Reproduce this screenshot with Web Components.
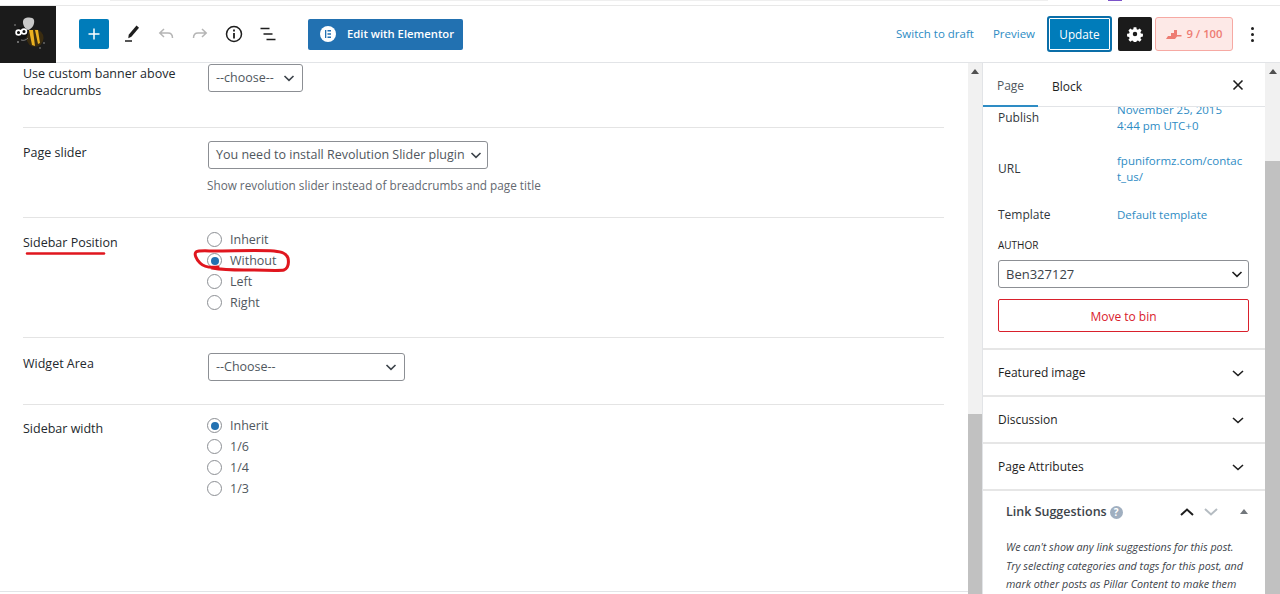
<!DOCTYPE html>
<html>
<head>
<meta charset="utf-8">
<style>
  html, body { margin: 0; height: 100%; overflow: hidden; background: #fff; }
  body { font: 12.5px/20px "Open Sans", "Noto Sans", sans-serif; color: #32373c; }
</style>
</head>
<body>
<wp-editor></wp-editor>
<script>
const css = `* { box-sizing: border-box; }`;

class WpSelect extends HTMLElement {
  constructor() {
    super();
    this.attachShadow({ mode: "open" });
    const strong = this.hasAttribute("dark");
    this.shadowRoot.innerHTML = `<style>${css}
      :host { display: inline-flex; align-items: center; justify-content: space-between; white-space: nowrap;
        width: var(--w, 95px); height: var(--h, 28px); padding: 0 var(--pr, 6px) 0 7px; margin-left: var(--ml, 1px);
        border: 1px solid #8c8f94; border-radius: 3px; background: #fff; color: #50575e; }
      svg { flex: none; }
    </style><slot></slot>
    <svg width="14" height="14" viewBox="0 0 14 14" fill="none" stroke="${strong ? "#1e1e1e" : "#3c434a"}" stroke-width="1.6"><path d="M2.5 5 7 9.3 11.5 5"/></svg>`;
  }
}
customElements.define("wp-select", WpSelect);

class WpRadio extends HTMLElement {
  constructor() {
    super();
    this.attachShadow({ mode: "open" });
    const on = this.hasAttribute("checked");
    this.shadowRoot.innerHTML = `<style>${css}
      :host { display: flex; align-items: center; gap: 8px; height: 21px; color: #50575e; }
      .dot { width: 15px; height: 15px; border: 1px solid #8c8f94; border-radius: 50%; background: #fff;
        display: grid; place-items: center; }
      .dot i { width: 8px; height: 8px; border-radius: 50%; background: #2271b1; display: ${on ? "block" : "none"}; }
    </style><span class="dot"><i></i></span><slot></slot>`;
  }
}
customElements.define("wp-radio", WpRadio);

class SettingRow extends HTMLElement {
  constructor() {
    super();
    this.attachShadow({ mode: "open" });
    this.shadowRoot.innerHTML = `<style>${css}
      :host { display: grid; grid-template-columns: 184px 1fr; margin: 0 24px 0 23px;
        border-bottom: 1px solid #e4e4e4; height: var(--row, 90px); padding-top: var(--pt, 24px); }
      :host([last]) { border-bottom: 0; }
      .label { color: #23282d; font-weight: 500; line-height: 17px; padding-top: var(--lt, 0); }
      .field { display: flex; flex-direction: column; align-items: flex-start; }
    </style><div class="label"><slot name="label"></slot></div><div class="field"><slot></slot></div>`;
  }
}
customElements.define("setting-row", SettingRow);

class TopBar extends HTMLElement {
  constructor() {
    super();
    this.attachShadow({ mode: "open" });
    this.shadowRoot.innerHTML = `<style>${css}
      :host { display: flex; align-items: center; height: 58px; flex: none; background: #fff;
        border-top: 1px solid #e8e8e8; border-bottom: 1px solid #e2e4e7; padding-right: 25px; }
      .logo { width: 56px; height: 57px; background: #1b1b1b; flex: none; display: grid; place-items: center; }
      .add { width: 30px; height: 30px; margin-left: 23px; background: #007cba; border-radius: 2px; display: grid; place-items: center; flex: none; }
      .tool { flex: none; display: grid; place-items: center; }
      .elementor { display: flex; align-items: center; gap: 11px; margin-left: 30px; height: 31px; width: 155px; padding-left: 12px;
        background: #2271b1; color: #fff; border-radius: 2px; font-weight: 600; font-size: 11.25px; }
      .elementor b { width: 16px; height: 16px; border-radius: 50%; background: #fff; display: grid; place-items: center; }
      .right { margin-left: auto; display: flex; align-items: center; }
      a { color: #2e8cc4; font-size: 11.5px; }
      .update { margin-left: 12px; width: 65px; height: 36px; background: #007cba; color: #fff; font-weight: 500; font-size: 11.75px; border-radius: 3px;
        display: grid; place-items: center; box-shadow: 0 0 0 1px #fff inset; border: 2px solid #0a6ea8; }
      .gear { margin-left: 6px; width: 34px; height: 34px; background: #1b1b1b; border-radius: 2px; display: grid; place-items: center; }
      .score { margin-left: 3px; width: 78px; height: 34px; background: #fde9e7; border: 1px solid #f6a9a3; border-radius: 3px; color: #ee7c73;
        display: flex; align-items: center; justify-content: center; gap: 5px; font-weight: 600; font-size: 11.25px; }
      .more { margin-left: 18px; width: 4px; display: flex; flex-direction: column; gap: 3px; }
      .more i { width: 3px; height: 3px; background: #1e1e1e; border-radius: 50%; }
    </style>
    <div class="logo">
      <svg width="36" height="36" viewBox="0 0 36 36">
        <path d="M16 13c-3-3-4-8-2-10 3-2 9-2 10 1 1 4-2 9-6 10z" fill="#c9c9c9"/>
        <ellipse cx="25" cy="22" rx="8.500" ry="8.800" fill="#3a2c10"/>
        <path d="M19 14l3 15 3 1-2-16zM25 14l3 14 2-1-2-13z" fill="#eab020"/>
        <circle cx="12" cy="17" r="6" fill="#111"/>
        <circle cx="8.500" cy="16.500" r="2.400" fill="none" stroke="#fff" stroke-width="1.700"/>
        <circle cx="14" cy="15.500" r="2.400" fill="none" stroke="#fff" stroke-width="1.700"/>
        <path d="M11 24c3 1 5 0 7-2" stroke="#777" fill="none"/>
        <circle cx="5" cy="9" r=".8" fill="#999"/><circle cx="30" cy="32" r=".8" fill="#999"/><circle cx="8" cy="26" r="1" fill="#888"/><circle cx="34" cy="27" r=".8" fill="#999"/>
      </svg>
    </div>
    <div class="add"><svg width="16" height="16" viewBox="0 0 16 16" stroke="#fff" stroke-width="1.5"><path d="M8 2.500v11M2.500 8h11"/></svg></div>
    <div class="tool" style="margin-left:13px;width:20px"><svg width="20" height="20" viewBox="0 0 20 20"><path d="M14.500 1.500l2.500 2.300-7.600 9-3.100 1.400.4-3.400z" fill="#1e1e1e"/><path d="M3 17h7" stroke="#1e1e1e" stroke-width="1.500"/></svg></div>
    <div class="tool" style="margin-left:14px;width:20px"><svg width="20" height="20" viewBox="0 0 20 20" fill="none" stroke="#b5b5b5" stroke-width="1.500"><path d="M8 5 3.800 9 8 13M4 9h8c3 0 4.500 1.800 4.500 5"/></svg></div>
    <div class="tool" style="margin-left:14px;width:20px"><svg width="20" height="20" viewBox="0 0 20 20" fill="none" stroke="#b5b5b5" stroke-width="1.500"><path d="M12 5l4.200 4L12 13M16 9H8c-3 0-4.500 1.800-4.500 5"/></svg></div>
    <div class="tool" style="margin-left:14px;width:20px"><svg width="20" height="20" viewBox="0 0 20 20" fill="none" stroke="#1e1e1e" stroke-width="1.500"><circle cx="10" cy="10" r="7.500"/><path d="M10 9v5.500M10 5.500v2" stroke-width="1.800"/></svg></div>
    <div class="tool" style="margin-left:14px;width:20px"><svg width="20" height="20" viewBox="0 0 20 20" stroke="#1e1e1e" stroke-width="1.500"><path d="M2.500 4.500h9M5.500 10h9M8.500 15.500h9"/></svg></div>
    <div class="elementor"><b><svg width="10" height="10" viewBox="0 0 10 10" fill="#2271b1"><path d="M2 1h1.300v8H2zM4.500 1H8v1.400H4.500zM4.500 4.300H8v1.400H4.500zM4.500 7.600H8V9H4.500z"/></svg></b><span>Edit with Elementor</span></div>
    <div class="right">
      <a style="margin-right:19px">Switch to draft</a>
      <a>Preview</a>
      <div class="update">Update</div>
      <div class="gear"><svg width="18" height="18" viewBox="0 0 18 18"><path fill="#fff" fill-rule="evenodd" d="M7.500 1.500h3l.4 2.200 1.400.6 1.900-1.300 2.100 2.100-1.300 1.900.6 1.400 2.200.4v3l-2.200.4-.6 1.400 1.300 1.900-2.100 2.100-1.900-1.300-1.400.6-.4 1.100h-3l-.4-1.100-1.400-.6-1.900 1.300-2.100-2.100 1.300-1.900-.6-1.400-2.200-.4v-3l2.200-.4.600-1.400-1.300-1.900 2.100-2.100 1.900 1.300 1.400-.6zM9 6.500a2.500 2.500 0 1 0 0 5 2.500 2.500 0 0 0 0-5z" transform="translate(.9 .9) scale(.9)"/></svg></div>
      <div class="score"><svg width="16" height="12" viewBox="0 0 16 12" fill="#ee7c73"><path d="M0 11l2-3h3V5h3V2h3v5h4.500v1.500H11L9 11z"/></svg><span>9 / 100</span></div>
      <div class="more"><i></i><i></i><i></i></div>
    </div>`;
  }
}
customElements.define("top-bar", TopBar);

class TopStrip extends HTMLElement {
  constructor() {
    super();
    this.attachShadow({ mode: "open" });
    this.shadowRoot.innerHTML = `<style>${css}
      :host { display: flex; height: 5px; flex: none; background: #fff; }
      .grey { margin-left: 110px; width: 938px; height: 1px; background: #efefef; }
      .purple { margin-left: 60px; width: 14px; height: 1px; background: #7b52c9; }
    </style><div class="grey"></div><div class="purple"></div>`;
  }
}
customElements.define("top-strip", TopStrip);

class ScrollTrack extends HTMLElement {
  constructor() {
    super();
    this.attachShadow({ mode: "open" });
    this.shadowRoot.innerHTML = `<style>${css}
      :host { display: flex; flex-direction: column; flex: none; width: var(--sw, 15px); background: #f1f1f1; }
      .arrow { height: 15px; display: grid; place-items: center; margin-top: 1px; }
      .arrow i { width: 0; height: 0; border: 4px solid transparent; border-top: 0; border-bottom: 5px solid #505050; }
      .gap { height: var(--gap, 340px); }
      .thumb { flex: 1; background: #c1c1c1; }
    </style><div class="arrow"><i></i></div><div class="gap"></div><div class="thumb"></div>`;
  }
}
customElements.define("scroll-track", ScrollTrack);

class SidePanel extends HTMLElement {
  constructor() {
    super();
    this.attachShadow({ mode: "open" });
    this.shadowRoot.innerHTML = `<style>${css}
      :host { display: block; border-top: 2px solid #e6e6e6; padding: 0 20px 0 15px; height: 47px; }
      .row { display: flex; align-items: center; justify-content: space-between; height: 45px; font-weight: 500; color: #1e1e1e; font-size: 12px; }
    </style><div class="row"><slot></slot><svg width="14" height="14" viewBox="0 0 14 14" fill="none" stroke="#1e1e1e" stroke-width="1.600"><path d="M2 5l5 4.500L12 5"/></svg></div>`;
  }
}
customElements.define("side-panel", SidePanel);

class EditorSidebar extends HTMLElement {
  constructor() {
    super();
    this.attachShadow({ mode: "open" });
    this.shadowRoot.innerHTML = `<style>${css}
      :host { display: flex; flex-direction: column; width: 283px; flex: none; height: 100%; background: #fff;
        border-left: 1px solid #e2e4e7; overflow: hidden; }
      .tabs { display: flex; align-items: stretch; height: 44px; flex: none; border-bottom: 1px solid #e2e4e7; background: #fff; position: relative; z-index: 1; font-size: 12px; }
      .tab { display: grid; place-items: center; height: 44px; padding-top: 3px; color: #1e1e1e; }
      .tab.on { width: 55px; color: #50575e; border-bottom: 2px solid #2e8cc4; }
      .tab.blk { margin-left: 14px; }
      .close { margin-left: auto; margin-right: 20px; align-self: center; }
      .scroll { flex: 1; overflow: hidden; }
      .summary { padding: 0 16px 0 15px; margin-top: -5px; height: 246px; }
      .kv { display: grid; grid-template-columns: 119px 128px; font-size: 12px; }
      .kv a { color: #2e8cc4; line-height: 16px; font-size: 11.5px; overflow-wrap: anywhere; }
      .kv span { color: #32373c; }
      .author { font-size: 10px; font-weight: 500; color: #1e1e1e; line-height: 14px; margin-top: 15px; }
      .bin { margin-top: 11px; height: 33px; padding-top: 2px; border: 1px solid #d9202c; border-radius: 2px; color: #d9202c; display: grid; place-items: center; font-size: 12px; }
      .links { border-top: 2px solid #e6e6e6; padding: 11px 16px 0 23px; }
      .links header { display: flex; align-items: center; height: 20px; color: #3c434a; font-weight: 600; font-size: 12.500px; }
      .q { width: 13px; height: 13px; margin-left: 3px; border-radius: 50%; background: #a0afc0; color: #fff; font-size: 10px; line-height: 13px; text-align: center; font-weight: 700; }
      .links p { margin: 16px 0 0; font-style: italic; font-size: 10.750px; line-height: 18.500px; color: #3c434a; white-space: nowrap; }
    </style>
    <div class="tabs">
      <div class="tab on">Page</div><div class="tab blk">Block</div>
      <svg class="close" width="14" height="14" viewBox="0 0 14 14" stroke="#1e1e1e" stroke-width="1.600"><path d="M2.500 2.500l9 9M11.500 2.500l-9 9"/></svg>
    </div>
    <div class="scroll">
      <div class="summary">
        <div class="kv"><span style="padding-top:6px">Publish</span><a>November 25, 2015<br>4:44 pm UTC+0</a></div>
        <div class="kv" style="margin-top:19px"><span style="padding-top:6px">URL</span><a>fpuniformz.com/contact_us/</a></div>
        <div class="kv" style="margin-top:22px"><span style="line-height:16px">Template</span><a>Default template</a></div>
        <div class="author">AUTHOR</div>
        <wp-select dark style="--w:251px;--h:28px;--pr:4px;--ml:0;margin-top:8px;display:flex;color:#3c434a;font-size:13px">Ben327127</wp-select>
        <div class="bin">Move to bin</div>
      </div>
      <side-panel>Featured image</side-panel>
      <side-panel>Discussion</side-panel>
      <side-panel>Page Attributes</side-panel>
      <div class="links">
        <header>Link Suggestions<span class="q">?</span>
          <svg style="margin-left:auto" width="16" height="12" viewBox="0 0 16 12" fill="none" stroke="#1e1e1e" stroke-width="2"><path d="M2 9l6-5.500L14 9"/></svg>
          <svg style="margin-left:8px" width="16" height="12" viewBox="0 0 16 12" fill="none" stroke="#b5bcc2" stroke-width="2"><path d="M2 3l6 5.500L14 3"/></svg>
          <svg style="margin-left:20px" width="10" height="8" viewBox="0 0 10 8" fill="#72777c"><path d="M5 1l4 5H1z"/></svg>
        </header>
        <p>We can't show any link suggestions for this post.<br>Try selecting categories and tags for this post, and<br>mark other posts as Pillar Content to make them</p>
      </div>
    </div>`;
  }
}
customElements.define("editor-sidebar", EditorSidebar);

class WpEditor extends HTMLElement {
  constructor() {
    super();
    this.attachShadow({ mode: "open" });
    this.shadowRoot.innerHTML = `<style>${css}
      :host { display: flex; flex-direction: column; height: 594px; width: 1280px; overflow: hidden; }
      .body { flex: 1; display: flex; min-height: 0; }
      main { width: 968px; flex: none; position: relative; overflow: hidden; border-bottom: 1px solid #e2e4e7; margin-bottom: 2px; }
      .hint { color: #646970; font-size: 11.750px; margin-top: 6px; line-height: 20px; }
      .ink { position: absolute; left: 0; top: 0; pointer-events: none; }
    </style>
    <top-strip></top-strip>
    <top-bar></top-bar>
    <div class="body">
      <main>
        <setting-row style="--row:65px;--pt:1px;--lt:1px"><span slot="label">Use custom banner above<br>breadcrumbs</span><wp-select>--choose--</wp-select></setting-row>
        <setting-row style="--row:90px;--pt:13px;--lt:3px"><span slot="label">Page slider</span><wp-select style="--w:280px;--pr:4px">You need to install Revolution Slider plugin</wp-select><div class="hint">Show revolution slider instead of breadcrumbs and page title</div></setting-row>
        <setting-row style="--row:120px;--pt:11px;--lt:5px">
          <span slot="label">Sidebar Position</span>
          <wp-radio>Inherit</wp-radio><wp-radio checked>Without</wp-radio><wp-radio>Left</wp-radio><wp-radio>Right</wp-radio>
        </setting-row>
        <setting-row style="--row:67px;--pt:15px;--lt:2px"><span slot="label">Widget Area</span><wp-select style="--w:197px">--Choose--</wp-select></setting-row>
        <setting-row last style="--row:120px;--pt:10px;--lt:5px">
          <span slot="label">Sidebar width</span>
          <wp-radio checked>Inherit</wp-radio><wp-radio>1/6</wp-radio><wp-radio>1/4</wp-radio><wp-radio>1/3</wp-radio>
        </setting-row>
        <svg class="ink" width="968" height="240" viewBox="0 63 968 240" fill="none" stroke="#e0161e" stroke-linecap="round" stroke-linejoin="round">
          <path d="M27 253.500h77" stroke-width="2.500"/>
          <path d="M218 267c-8 1-14 0-18-4-4-4-6-9-4-11 3-2 12-1 18-1 20 0 44-1 60 0 8 1 12 2 14 7 1 5 0 10-4 12-4 1-20 0-40 0-10 0-20 0-32-2" stroke-width="3"/>
        </svg>
      </main>
      <scroll-track style="--sw:14px;--gap:335px"></scroll-track>
      <editor-sidebar></editor-sidebar>
      <scroll-track style="--sw:15px;--gap:82px"></scroll-track>
    </div>`;
  }
}
customElements.define("wp-editor", WpEditor);
</script>
</body>
</html>
